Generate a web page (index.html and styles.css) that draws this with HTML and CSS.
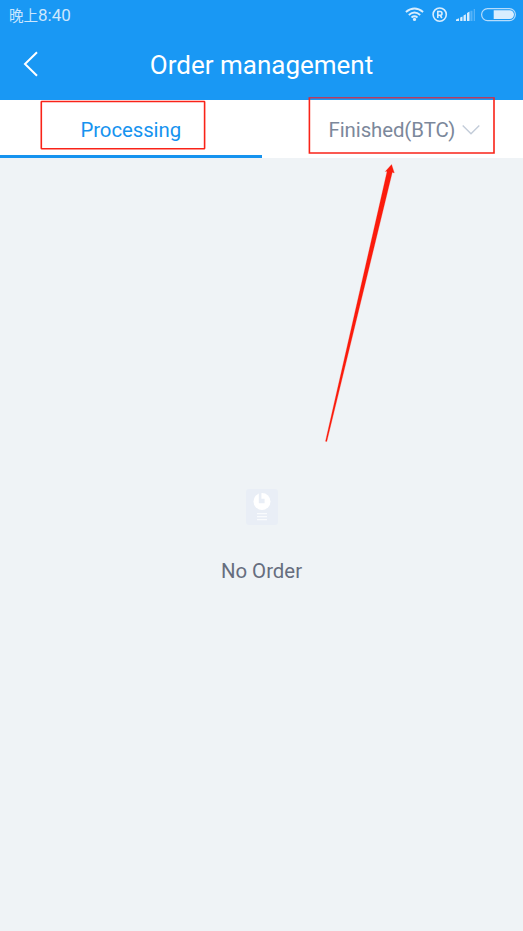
FILE: index.html
```html
<!DOCTYPE html>
<html lang="en">
<head>
<meta charset="utf-8">
<title>Order management</title>
<link rel="stylesheet" href="styles.css">
</head>
<body>
<div class="screen">
  <header class="header">
    <div class="status">
      <span class="time"><span class="period">晚上</span>8:40</span>
      <svg class="status-icons" width="114" height="24" viewBox="0 0 114 24" fill="none">
        <g stroke="#d8edfe" stroke-width="1.9">
          <path d="M.9 12.1Q9.5 5.1 18.1 12.1"/>
          <path d="M3.8 14.9Q9.5 10.3 15.2 14.9"/>
          <path d="M6.5 17.5Q9.5 15.2 12.5 17.5"/>
        </g>
        <circle cx="9.5" cy="19.4" r="1.6" fill="#d8edfe"/>
        <circle cx="34.7" cy="14.6" r="6.6" stroke="#d8edfe" stroke-width="1.6"/>
        <path d="M32.8 18v-6.5h2.3a1.7 1.7 0 0 1 0 3.8h-2.3m2.3 0 1.8 2.7" stroke="#d8edfe" stroke-width="1.6"/>
        <path d="M51 21v-1.5l3-1.3V21zM55.2 21v-3.6l2.3-1V21zM58.5 21v-5.5l2.4-1.3V21zM62 21v-8l2.5-1.5V21z" fill="#d8edfe"/>
        <path d="M65.4 21V10.8h2.1V21zM68.7 21V8.9h1.3V21z" fill="#56b3f8"/>
        <rect x="76.6" y="8.6" width="33.8" height="12" rx="6" stroke="#b5dcfc" stroke-width="1.2"/>
        <path d="M88.7 10.2h15.9a4.4 4.4 0 0 1 0 8.8H88.7z" fill="#d8edfe"/>
      </svg>
    </div>
    <div class="titlebar">
      <svg class="back" width="16" height="26" viewBox="0 0 16 26"><path d="M14 1.2 2 13l12 11.8" fill="none" stroke="#fff" stroke-width="2"/></svg>
      <h1 class="title">Order management</h1>
    </div>
  </header>
  <nav class="tabs">
    <div class="tab active"><span class="tab-text">Processing</span></div>
    <div class="tab finished"><span class="tab-text">Finished(BTC)</span>
      <svg class="chevron" width="18" height="12" viewBox="0 0 18 12"><path d="M.7 1.5 9 9.8l8.3-8.3" fill="none" stroke="#c3ccd9" stroke-width="1.4"/></svg>
    </div>
  </nav>
  <main class="empty">
    <svg width="34" height="38" viewBox="0 0 34 38">
      <rect x="1" y="1" width="32" height="36" rx="3" fill="#e9eef6"/>
      <circle cx="17" cy="13.5" r="8.5" fill="#fff"/>
      <path d="M13.8 4.8v10.4h5.8v-4.4h-3.2V4.8z" fill="#e9eef6"/>
      <path d="M12 25.6h10M12 28.6h10M12 31.6h10" stroke="#f9fbfd" stroke-width="1.3"/>
    </svg>
    <p class="empty-text">No Order</p>
  </main>
  <svg class="annotations" width="523" height="931" viewBox="0 0 523 931">
    <g fill="none" stroke="#f92318" stroke-width="1.6">
      <rect x="41.3" y="101.5" width="163.3" height="47.3" rx=".5"/>
      <path d="M309.4 97.7V153H494V97.7"/>
    </g>
    <path d="M308.6 97.8H494.7" stroke="#b63c62" stroke-width="1.4"/>
    <path d="M391.6 164.5 385.3 171.5 387.1 171.3 325.5 441.3 326.8 441.6 392.3 172.3 394.3 172.9z" fill="#fb1b0c" stroke="#fb1b0c" stroke-width=".25"/>
  </svg>
</div>
</body>
</html>
```
FILE: styles.css
```css
* { box-sizing: border-box; }
body { margin: 0; font-family: Roboto, "Noto Sans CJK SC", sans-serif; }
.screen { position: relative; width: 523px; height: 931px; display: flex; flex-direction: column; background: #eff3f6; overflow: hidden; }
.header { height: 100px; background: #1998f4; color: #fff; }
.status { height: 30px; display: flex; justify-content: space-between; padding-left: 9px; padding-right: 4px; }
.time { font-size: 17px; line-height: 31px; color: #cce7fd; white-space: nowrap; }
.period { font-size: 14.5px; }
.status-icons { display: block; }
.titlebar { height: 70px; display: grid; grid-template-columns: 60px 1fr 60px; }
.back { margin: 21px 0 0 23px; }
.title { margin: 0; font-size: 26px; font-weight: 400; line-height: 70px; text-align: center; white-space: nowrap; }
.tabs { height: 58px; flex: none; display: grid; grid-template-columns: 261.5px 1fr; grid-template-rows: 58px; background: #fff; font-size: 20.4px; line-height: 60px; letter-spacing: -.08px; }
.tab { display: flex; justify-content: center; white-space: nowrap; }
.active { color: #1693ef; border-bottom: 3px solid #1693ef; }
.finished { justify-content: flex-start; padding-left: 67px; color: #7c889b; }
.chevron { margin: 24px 0 0 7px; }
.empty { flex: 1; display: flex; flex-direction: column; align-items: center; padding-top: 330px; }
.empty-text { margin: 29px 0 0; font-size: 20.4px; line-height: 32px; color: #666d7e; }
.annotations { position: absolute; left: 0; top: 0; }
```
